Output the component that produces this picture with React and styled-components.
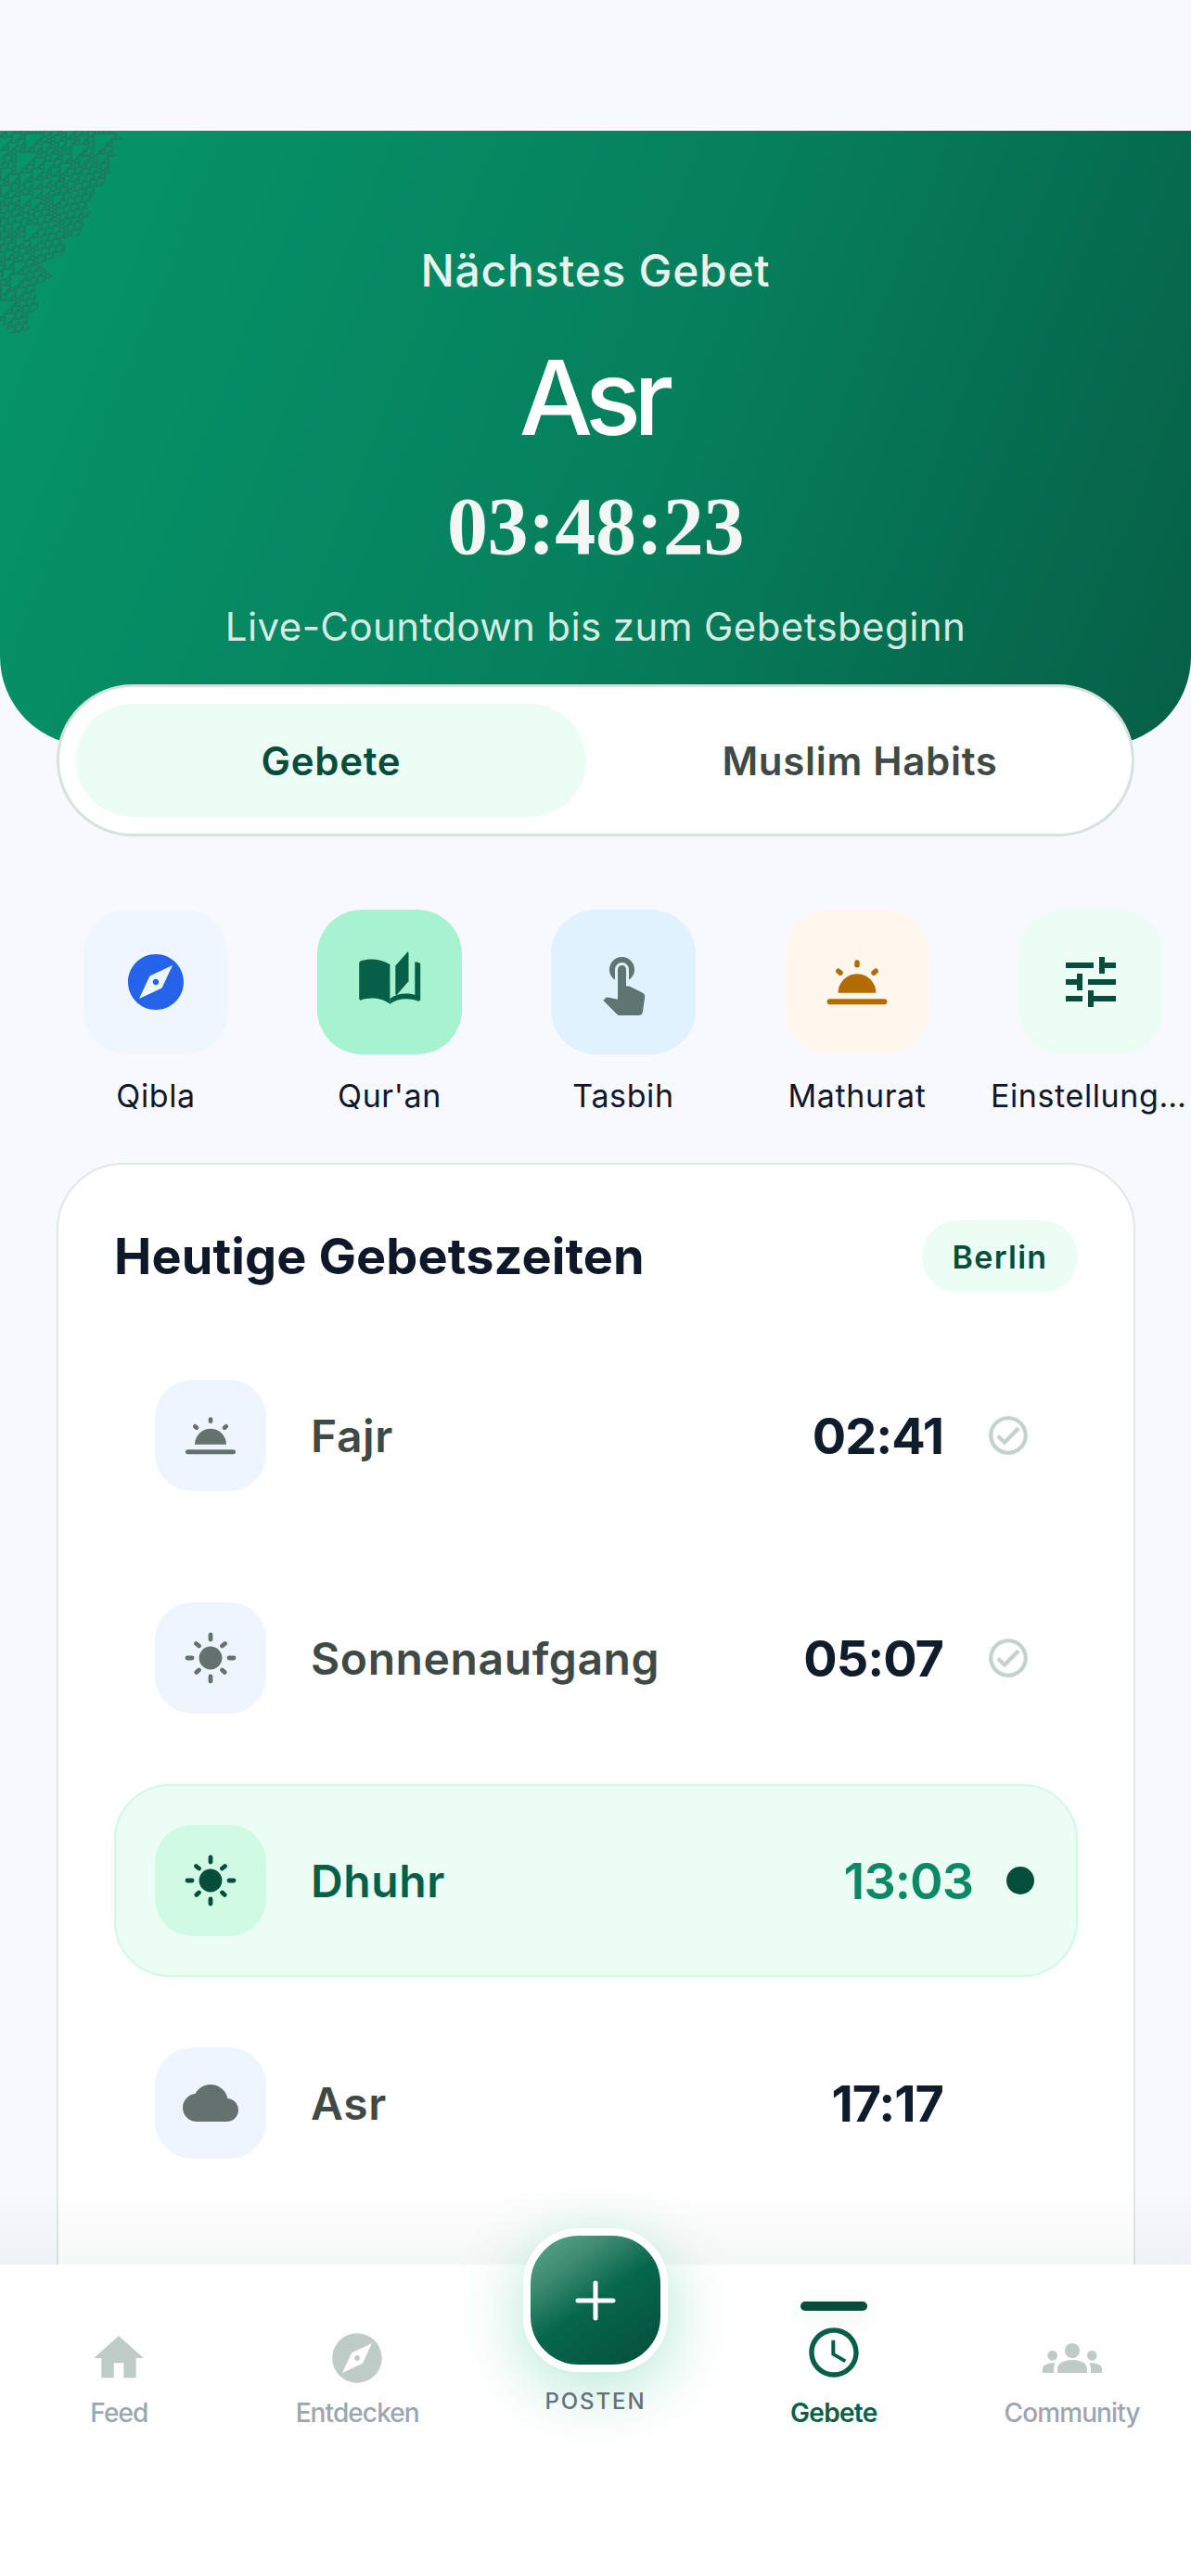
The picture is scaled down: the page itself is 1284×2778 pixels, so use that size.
import React, { useMemo } from 'react';
import styled, { createGlobalStyle } from 'styled-components';
import { MdExplore, MdTouchApp, MdTune, MdHome, MdGroups, MdCloud, MdOutlineSchedule, MdOutlineCheckCircle } from 'react-icons/md';

const Global = createGlobalStyle`
  html, body { margin: 0; padding: 0; background: #f8f9ff; }
  body { width: 1284px; height: 2778px; overflow: hidden; font-family: Inter, "Liberation Sans", sans-serif; }
  * { box-sizing: border-box; }
`;

const Page = styled.div`
  width: 1284px;
  height: 2778px;
  padding-top: 141px;
  overflow: hidden;
  position: relative;
  background: #f8f9ff;
`;

const Hero = styled.header`
  position: relative;
  height: 663px;
  padding-top: 121px;
  border-radius: 0 0 96px 96px;
  background: linear-gradient(112deg, #06966a 0%, #067f5c 55%, #065f46 100%);
  display: flex;
  flex-direction: column;
  align-items: center;
  color: #fff;
  overflow: hidden;
`;

const HeroTexture = styled.svg`
  position: absolute;
  top: 0;
  left: 0;
`;

const HeroLabel = styled.div`
  font-size: 48px;
  line-height: 60px;
  font-weight: 500;
  letter-spacing: 0.7px;
  color: #e3f5ee;
`;

const HeroPrayer = styled.div`
  margin-top: 41px;
  font-size: 112px;
  line-height: 130px;
  font-weight: 500;
  letter-spacing: -8px;
  padding-right: 6px;
`;

const HeroCountdown = styled.div`
  margin-top: 25px;
  font-family: "Liberation Serif", serif;
  font-size: 88px;
  line-height: 100px;
  font-weight: 700;
  letter-spacing: -0.3px;
  color: #f2f7f5;
`;

const HeroNote = styled.div`
  margin-top: 30px;
  font-size: 42px;
  line-height: 56px;
  font-weight: 400;
  letter-spacing: 0.4px;
  color: #d3ece3;
`;

const Tabs = styled.nav`
  position: relative;
  margin: -66px 61px 0;
  height: 164px;
  padding: 18px;
  display: grid;
  grid-template-columns: 1fr 1fr;
  gap: 20px;
  background: #fff;
  border: 3px solid #d7e1de;
  border-radius: 82px;
`;

const Tab = styled.div`
  display: flex;
  align-items: center;
  justify-content: center;
  border-radius: 62px;
  font-size: 42px;
  font-weight: 600;
  letter-spacing: 0.7px;
  background: ${p => (p.$active ? '#ecfdf5' : 'transparent')};
  color: ${p => (p.$active ? '#064e3b' : '#3f4946')};
`;

const Actions = styled.section`
  display: flex;
  gap: 36px;
  padding-left: 60px;
  margin-top: 79px;
`;

const Action = styled.div`
  width: 216px;
  flex: none;
  display: flex;
  flex-direction: column;
  align-items: center;
`;

const ActionIcon = styled.div`
  width: 156px;
  height: 156px;
  border-radius: 48px;
  display: flex;
  align-items: center;
  justify-content: center;
  background: ${p => p.$bg};
  color: ${p => p.$fg};
`;

const ActionLabel = styled.div`
  width: 100%;
  margin-top: 23px;
  font-size: 34px;
  line-height: 44px;
  font-weight: 400;
  letter-spacing: 0.6px;
  text-align: center;
  color: #0f172a;
  white-space: nowrap;
  overflow: hidden;
  text-overflow: ellipsis;
`;

const Card = styled.section`
  margin: 50px 60px 0 61px;
  padding: 60px;
  background: #fff;
  border: 2.5px solid #dfe8e5;
  border-radius: 72px;
`;

const CardHeader = styled.div`
  display: flex;
  align-items: center;
  justify-content: space-between;
  margin-bottom: 50px;
`;

const CardTitle = styled.h2`
  margin: 0;
  font-size: 54px;
  line-height: 68px;
  font-weight: 700;
  color: #0f172a;
  letter-spacing: 0.1px;
`;

const CityPill = styled.div`
  width: 168px;
  height: 78px;
  border-radius: 39px;
  background: #ecfdf5;
  color: #064e3b;
  display: flex;
  align-items: center;
  justify-content: center;
  font-size: 34px;
  font-weight: 600;
  letter-spacing: 1.3px;
`;

const RowList = styled.div`
  display: flex;
  flex-direction: column;
  gap: 32px;
`;

const Row = styled.div`
  height: 208px;
  display: flex;
  align-items: center;
  padding: 0 44px 0 42px;
  border: 2.5px solid ${p => (p.$active ? '#d1fae5' : 'transparent')};
  border-radius: 60px;
  background: ${p => (p.$active ? '#ecfdf5' : 'transparent')};
`;

const RowIcon = styled.div`
  width: 120px;
  height: 120px;
  flex: none;
  border-radius: 40px;
  display: flex;
  align-items: center;
  justify-content: center;
  background: ${p => (p.$active ? '#d1fae5' : '#eff5ff')};
  color: ${p => (p.$active ? '#064e3b' : '#64716f')};
`;

const RowName = styled.div`
  flex: 1;
  margin-left: 48px;
  font-size: 48px;
  font-weight: 600;
  letter-spacing: 0.6px;
  color: ${p => (p.$active ? '#065f46' : '#3f4946')};
`;

const RowTime = styled.div`
  font-size: 54px;
  letter-spacing: -1px;
  color: ${p => (p.$active ? '#0a8a64' : '#0f1c2c')};
  font-weight: ${p => (p.$active ? 600 : 700)};
`;

const RowTrail = styled.div`
  flex: none;
  width: 50px;
  margin-left: ${p => (p.$active ? '17px' : '45px')};
  margin-right: ${p => (p.$active ? '0' : '4px')};
  display: flex;
  align-items: center;
  justify-content: center;
  color: #c3d2cd;
`;

const Dot = styled.span`
  width: 30px;
  height: 30px;
  border-radius: 50%;
  background: #064e3b;
  margin-left: 18px;
`;

const BottomNav = styled.nav`
  position: absolute;
  left: 0;
  right: 0;
  bottom: 0;
  height: 336px;
  padding-top: 69px;
  display: grid;
  grid-template-columns: repeat(5, 1fr);
  align-items: start;
  background: #fff;
  &::before {
    content: '';
    position: absolute;
    left: 0;
    right: 0;
    top: -80px;
    height: 80px;
    background: linear-gradient(to bottom, rgba(64, 90, 80, 0), rgba(64, 90, 80, 0.05));
  }
`;

const NavItem = styled.div`
  position: relative;
  display: flex;
  flex-direction: column;
  align-items: center;
  color: ${p => (p.$active ? '#065f46' : '#bfcbc6')};
`;

const NavIconSlot = styled.div`
  height: 64px;
  display: flex;
  align-items: center;
  justify-content: center;
  transform: translateY(${p => (p.$active ? '-6px' : '0')});
`;

const NavLabel = styled.div`
  margin-top: 9px;
  font-size: 28px;
  line-height: 36px;
  letter-spacing: ${p => (p.$active ? '-0.7px' : '-0.9px')};
  color: ${p => (p.$active ? '#065f46' : '#9ca6ae')};
  font-weight: ${p => (p.$active ? 600 : 500)};
`;

const ActiveBar = styled.span`
  position: absolute;
  top: -29px;
  width: 72px;
  height: 10px;
  border-radius: 5px;
  background: #064e3b;
  box-shadow: 0 6px 24px rgba(6, 95, 70, 0.12);
`;

const FabColumn = styled.div`
  position: relative;
  display: flex;
  flex-direction: column;
  align-items: center;
  margin-top: -108px;
`;

const Fab = styled.div`
  width: 156px;
  height: 155px;
  border: 8px solid #fff;
  border-radius: 60px;
  display: flex;
  align-items: center;
  justify-content: center;
  color: #fff;
  background: linear-gradient(145deg, #5aa88c 0%, #3d8a70 26%, #06674c 50%, #064e3b 100%);
  box-shadow: 0 16px 70px rgba(16, 185, 129, 0.32);
`;

const FabLabel = styled.div`
  margin-top: 20px;
  font-size: 24px;
  line-height: 24px;
  font-weight: 500;
  letter-spacing: 1.9px;
  color: #667078;
`;

function useAutomaton(cols, rows, cell) {
  return useMemo(() => {
    let seed = 12345;
    let line = Array.from({ length: cols }, () => {
      seed = (seed * 1103515245 + 12345) & 0x7fffffff;
      return (seed >> 16) & 1;
    });
    let d = '';
    for (let y = 0; y < rows; y++) {
      line.forEach((v, x) => {
        if (v) d += `M${x * cell} ${y * cell}h${cell}v${cell}h-${cell}z`;
      });
      line = line.map((_, x) => {
        const l = line[(x - 1 + cols) % cols];
        const c = line[x];
        const r = line[(x + 1) % cols];
        return (110 >> ((l << 2) | (c << 1) | r)) & 1;
      });
    }
    return d;
  }, [cols, rows, cell]);
}

function Texture() {
  const d = useAutomaton(70, 120, 2);
  return (
    <HeroTexture width="140" height="240" viewBox="0 0 140 240" aria-hidden="true">
      <defs>
        <clipPath id="heroClip">
          <polygon points="0,0 120,0 137,12 125,21 125,33 117,50 107,63 93,80 98,88 90,103 85,114 68,116 72,131 43,144 57,157 37,169 42,189 30,202 32,215 13,219 0,206" />
        </clipPath>
      </defs>
      <path d={d} fill="#24705a" opacity="0.6" clipPath="url(#heroClip)" />
    </HeroTexture>
  );
}

function Twilight({ size }) {
  return (
    <svg width={size} height={size} viewBox="0 0 60 60" fill="none" aria-hidden="true">
      <path d="M13 39.7A17 17 0 0 1 47 39.7Z" fill="currentColor" />
      <g stroke="currentColor" strokeLinecap="round">
        <path d="M5.5 47.7H54.5" strokeWidth="5" />
        <path d="M30 12.6V14.8M13.2 20.2L15 21.8M46.8 20.2L45 21.8" strokeWidth="4.6" />
      </g>
    </svg>
  );
}

function Sun({ size }) {
  return (
    <svg width={size} height={size} viewBox="0 0 60 60" fill="none" aria-hidden="true">
      <circle cx="30" cy="30" r="12.4" fill="currentColor" />
      <path
        d="M30 5V10M30 50V55M5 30H10M50 30H55M14.5 14.5L17.5 17M42.5 17L45.5 14.5M14.8 45.4L17.4 43M42.6 43L45.2 45.4"
        stroke="currentColor"
        strokeWidth="4.8"
        strokeLinecap="round"
      />
    </svg>
  );
}

function Book({ size }) {
  return (
    <svg width={size} height={size} viewBox="0 0 72 72" fill="currentColor" aria-hidden="true">
      <path d="M3.2 16C3.2 14.5 4 13.5 5.5 13C14 10.5 26 10.5 36.4 17V59.7C28 53 14 52 5.5 55.5C4.2 56 3.2 55 3.2 54Z" />
      <path d="M42.3 18.5L55 4C55.8 3.2 56.5 3.6 56.5 4.8V35.3L44 49.5C43.2 50.2 42.3 49.8 42.3 48.8Z" />
      <path d="M36.4 59.7C45 53 57 53 66.5 56.5C68 57 69.2 56 69.2 54.5V17C69.2 15.5 68 14.8 63.3 14.3V50C55 47.5 44 48 36.4 54Z" />
    </svg>
  );
}

const actions = [
  { label: 'Qibla', bg: '#eff6ff', fg: '#2563eb', icon: <MdExplore size={72} /> },
  { label: "Qur'an", bg: '#a7f3d0', fg: '#065f46', icon: <Book size={72} /> },
  { label: 'Tasbih', bg: '#e0f2fe', fg: '#5f7572', icon: <MdTouchApp size={72} /> },
  { label: 'Mathurat', bg: '#fff7ed', fg: '#b36b00', icon: <Twilight size={72} /> },
  { label: 'Einstellungen', bg: '#ecfdf5', fg: '#064e3b', icon: <MdTune size={72} /> },
];

const prayers = [
  { name: 'Fajr', time: '02:41', icon: <Twilight size={60} />, done: true },
  { name: 'Sonnenaufgang', time: '05:07', icon: <Sun size={60} />, done: true },
  { name: 'Dhuhr', time: '13:03', icon: <Sun size={60} />, active: true },
  { name: 'Asr', time: '17:17', icon: <MdCloud size={60} /> },
  { name: 'Maghrib', time: '20:21', icon: <Twilight size={60} /> },
];

export default function App() {
  return (
    <Page>
      <Global />
      <Hero>
        <Texture />
        <HeroLabel>Nächstes Gebet</HeroLabel>
        <HeroPrayer>Asr</HeroPrayer>
        <HeroCountdown>03:48:23</HeroCountdown>
        <HeroNote>Live-Countdown bis zum Gebetsbeginn</HeroNote>
      </Hero>
      <Tabs>
        <Tab $active>Gebete</Tab>
        <Tab>Muslim Habits</Tab>
      </Tabs>
      <Actions>
        {actions.map(a => (
          <Action key={a.label}>
            <ActionIcon $bg={a.bg} $fg={a.fg}>{a.icon}</ActionIcon>
            <ActionLabel>{a.label}</ActionLabel>
          </Action>
        ))}
      </Actions>
      <Card>
        <CardHeader>
          <CardTitle>Heutige Gebetszeiten</CardTitle>
          <CityPill>Berlin</CityPill>
        </CardHeader>
        <RowList>
          {prayers.map(p => (
            <Row key={p.name} $active={p.active}>
              <RowIcon $active={p.active}>{p.icon}</RowIcon>
              <RowName $active={p.active}>{p.name}</RowName>
              <RowTime $active={p.active}>{p.time}</RowTime>
              <RowTrail $active={p.active}>
                {p.done && <MdOutlineCheckCircle size={50} />}
                {p.active && <Dot />}
              </RowTrail>
            </Row>
          ))}
        </RowList>
      </Card>
      <BottomNav>
        <NavItem>
          <NavIconSlot><MdHome size={64} /></NavIconSlot>
          <NavLabel>Feed</NavLabel>
        </NavItem>
        <NavItem>
          <NavIconSlot><MdExplore size={64} /></NavIconSlot>
          <NavLabel>Entdecken</NavLabel>
        </NavItem>
        <FabColumn>
          <Fab>
            <svg width="48" height="48" viewBox="0 0 48 48" fill="none" aria-hidden="true">
              <path d="M24 5V43M5 24H43" stroke="currentColor" strokeWidth="5" strokeLinecap="round" />
            </svg>
          </Fab>
          <FabLabel>POSTEN</FabLabel>
        </FabColumn>
        <NavItem $active>
          <ActiveBar />
          <NavIconSlot $active><MdOutlineSchedule size={64} /></NavIconSlot>
          <NavLabel $active>Gebete</NavLabel>
        </NavItem>
        <NavItem>
          <NavIconSlot><MdGroups size={64} /></NavIconSlot>
          <NavLabel>Community</NavLabel>
        </NavItem>
      </BottomNav>
    </Page>
  );
}
